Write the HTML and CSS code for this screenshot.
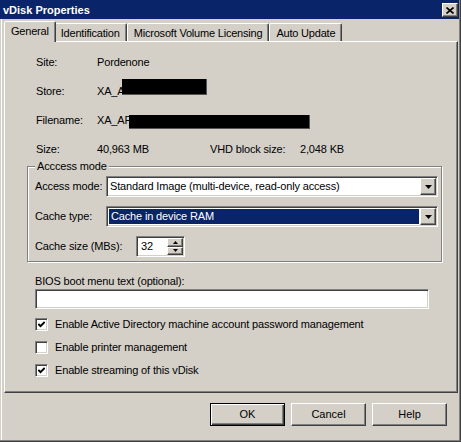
FILE: index.html
```html
<!DOCTYPE html>
<html lang="en">
<head>
    <meta charset="UTF-8">
    <title>vDisk Properties</title>
    <link rel="stylesheet" href="styles.css">
</head>
<body>
    <div class="dialog">
        <div class="title-bar">
            <span class="title-text">vDisk Properties</span>
            <span class="close-btn">
                <svg width="8" height="7" viewBox="0 0 8 7"><path d="M0.5 0.5 L7.5 6.5 M7.5 0.5 L0.5 6.5" stroke="#000" stroke-width="1.6"/></svg>
            </span>
        </div>

        <div class="client">
            <div class="tab-strip">
                <div class="tab active">General</div>
                <div class="tab">Identification</div>
                <div class="tab">Microsoft Volume Licensing</div>
                <div class="tab">Auto Update</div>
            </div>

            <div class="tab-page">
                <div class="info-grid">
                    <div class="info-row">
                        <span class="info-label">Site:</span>
                        <span>Pordenone</span>
                    </div>
                    <div class="info-row">
                        <span class="info-label">Store:</span>
                        <span>XA_A</span>
                        <span class="redact redact-store"></span>
                    </div>
                    <div class="info-row">
                        <span class="info-label">Filename:</span>
                        <span>XA_AP</span>
                        <span class="redact redact-file"></span>
                    </div>
                    <div class="info-row">
                        <span class="info-label">Size:</span>
                        <span class="size-value">40,963 MB</span>
                        <span class="vhd-label">VHD block size:</span>
                        <span>2,048 KB</span>
                    </div>
                </div>

                <fieldset class="group">
                    <legend>Acccess mode</legend>
                    <div class="field-row">
                        <span class="field-label">Access mode:</span>
                        <div class="combo">
                            <span class="combo-text">Standard Image (multi-device, read-only access)</span>
                            <span class="drop-btn">
                                <svg width="7" height="4" viewBox="0 0 7 4"><polygon points="0,0 7,0 3.5,4" fill="#000"/></svg>
                            </span>
                        </div>
                    </div>
                    <div class="field-row">
                        <span class="field-label">Cache type:</span>
                        <div class="combo selected">
                            <span class="combo-text">Cache in device RAM</span>
                            <span class="drop-btn">
                                <svg width="7" height="4" viewBox="0 0 7 4"><polygon points="0,0 7,0 3.5,4" fill="#000"/></svg>
                            </span>
                        </div>
                    </div>
                    <div class="field-row">
                        <span class="field-label spin-label">Cache size (MBs):</span>
                        <div class="spin">
                            <span class="spin-text">32</span>
                            <span class="spin-btns">
                                <span class="spin-btn"><svg width="5" height="3" viewBox="0 0 5 3"><polygon points="2.5,0 5,3 0,3" fill="#000"/></svg></span>
                                <span class="spin-btn"><svg width="5" height="3" viewBox="0 0 5 3"><polygon points="0,0 5,0 2.5,3" fill="#000"/></svg></span>
                            </span>
                        </div>
                    </div>
                </fieldset>

                <div class="bios">
                    <div class="bios-label">BIOS boot menu text (optional):</div>
                    <div class="text-input"></div>
                </div>

                <div class="check-list">
                    <div class="check-row">
                        <span class="checkbox">
                            <svg width="7" height="7" viewBox="0 0 7 7"><polyline points="0.3,3 2.5,5.2 6.7,1" fill="none" stroke="#000" stroke-width="2"/></svg>
                        </span>
                        <span>Enable Active Directory machine account password management</span>
                    </div>
                    <div class="check-row">
                        <span class="checkbox"></span>
                        <span>Enable printer management</span>
                    </div>
                    <div class="check-row">
                        <span class="checkbox">
                            <svg width="7" height="7" viewBox="0 0 7 7"><polyline points="0.3,3 2.5,5.2 6.7,1" fill="none" stroke="#000" stroke-width="2"/></svg>
                        </span>
                        <span>Enable streaming of this vDisk</span>
                    </div>
                </div>
            </div>

            <div class="button-row">
                <button class="btn btn-default">OK</button>
                <button class="btn">Cancel</button>
                <button class="btn">Help</button>
            </div>
        </div>
    </div>
</body>
</html>
```

FILE: styles.css
```css
* {
    margin: 0;
    padding: 0;
    box-sizing: border-box;
}

body {
    font-family: "Liberation Sans", Arial, sans-serif;
    font-size: 11px;
    line-height: 13px;
    letter-spacing: -0.15px;
    color: #000;
    background: #d4d0c8;
}

.dialog {
    width: 461px;
    height: 442px;
    background: #d4d0c8;
    border-right: 1px solid #404040;
    border-bottom: 1px solid #404040;
    box-shadow: inset -1px -1px 0 #808080;
    padding: 0 1px 1px 0;
    display: flex;
    flex-direction: column;
}

.title-bar {
    height: 19px;
    background: #0a246a;
    color: #fff;
    font-weight: bold;
    letter-spacing: 0;
    display: flex;
    align-items: center;
    justify-content: space-between;
    padding: 1px 1px 0 3px;
}

.close-btn {
    width: 16px;
    height: 14px;
    background: #d4d0c8;
    border: 1px solid;
    border-color: #fff #404040 #404040 #fff;
    box-shadow: inset -1px -1px 0 #808080;
    display: flex;
    align-items: center;
    justify-content: center;
}

.client {
    flex: 1;
    display: flex;
    flex-direction: column;
    padding: 2px 0 0 2px;
    border-left: 1px solid #d4d0c8;
    box-shadow: inset 1px 0 0 #fff;
}

/* tabs */
.tab-strip {
    display: flex;
    align-items: flex-end;
    height: 20px;
    padding-left: 1px;
}

.tab {
    height: 18px;
    padding: 1px 6px 0;
    border: 1px solid;
    border-bottom: none;
    border-color: #fff #404040 transparent #fff;
    box-shadow: inset -1px 0 0 #808080;
    border-radius: 2px 2px 0 0;
    display: flex;
    align-items: center;
    white-space: nowrap;
    letter-spacing: -0.2px;
}

.tab.active {
    height: 21px;
    margin: 0 -2px -1px 0;
    padding: 0 6px 1px;
    background: #d4d0c8;
    position: relative;
    z-index: 1;
}

.tab-page {
    width: 454px;
    height: 352px;
    margin-left: 1px;
    border: 1px solid;
    border-color: #fff #404040 #404040 #fff;
    box-shadow: inset -1px -1px 0 #808080;
    padding: 6px 0 0 22px;
}

/* read-only info */
.info-row {
    height: 29px;
    margin-left: 9px;
    display: flex;
    align-items: center;
    white-space: nowrap;
}

.info-label {
    width: 61px;
}

.size-value {
    width: 113px;
}

.vhd-label {
    width: 90px;
}

.redact {
    background: #000;
    border-right: 1px solid #555;
    border-bottom: 1px solid #555;
}

.redact-store {
    width: 85px;
    height: 16px;
    margin-left: -3px;
    margin-bottom: 9px;
}

.redact-file {
    width: 181px;
    height: 14px;
    margin-left: -3px;
    margin-top: 3px;
}

/* access mode group */
.group {
    width: 415px;
    margin-top: -4px;
    border: 1px solid #808080;
    box-shadow: 1px 1px 0 #fff, inset 1px 1px 0 #fff;
    padding: 3px 0 4px 7px;
}

.group legend {
    padding: 0 2px;
    background: #d4d0c8;
}

.field-row {
    height: 21px;
    display: flex;
    align-items: center;
}

.field-row + .field-row {
    margin-top: 9px;
}

.field-label {
    width: 71px;
    white-space: nowrap;
}

.spin-label {
    width: 101px;
}

.combo,
.spin,
.text-input,
.checkbox {
    background: #fff;
    border: 1px solid;
    border-color: #808080 #fff #fff #808080;
    box-shadow: inset 1px 1px 0 #404040, inset -1px -1px 0 #d4d0c8;
}

.combo {
    width: 332px;
    height: 21px;
    padding: 1px;
    display: flex;
}

.combo-text {
    flex: 1;
    padding-left: 2px;
    display: flex;
    align-items: center;
    white-space: nowrap;
}

.combo.selected .combo-text {
    background: #0a246a;
    color: #fff;
    box-shadow: inset 0 0 0 1px #fff;
    padding-left: 3px;
}

.drop-btn,
.spin-btn,
.btn {
    background: #d4d0c8;
    border: 1px solid;
    border-color: #fff #404040 #404040 #fff;
    box-shadow: inset -1px -1px 0 #808080;
}

.drop-btn {
    width: 16px;
    height: 17px;
    display: flex;
    align-items: center;
    justify-content: center;
}

.spin {
    width: 49px;
    height: 21px;
    padding: 1px;
    display: flex;
}

.spin-text {
    flex: 1;
    padding-left: 3px;
    display: flex;
    align-items: center;
}

.spin-btns {
    width: 16px;
    display: flex;
    flex-direction: column;
}

.spin-btn {
    flex: 1;
    display: flex;
    align-items: center;
    justify-content: center;
}

/* bios text */
.bios {
    margin: 13px 0 0 8px;
}

.text-input {
    width: 394px;
    height: 20px;
    margin-top: 1px;
}

/* checkboxes */
.check-list {
    margin: 9px 0 0 8px;
    display: flex;
    flex-direction: column;
    gap: 10px;
}

.check-row {
    height: 13px;
    display: flex;
    align-items: center;
    gap: 7px;
    white-space: nowrap;
}

.checkbox {
    width: 13px;
    height: 13px;
    display: flex;
    align-items: center;
    justify-content: center;
}

/* dialog buttons */
.button-row {
    display: flex;
    justify-content: flex-end;
    gap: 6px;
    margin-top: 10px;
    padding-right: 12px;
}

.btn {
    width: 75px;
    height: 23px;
    font: inherit;
    color: #000;
}

.btn-default {
    border-color: #000;
    box-shadow: inset 1px 1px 0 #fff, inset -1px -1px 0 #404040, inset -2px -2px 0 #808080;
}
```
